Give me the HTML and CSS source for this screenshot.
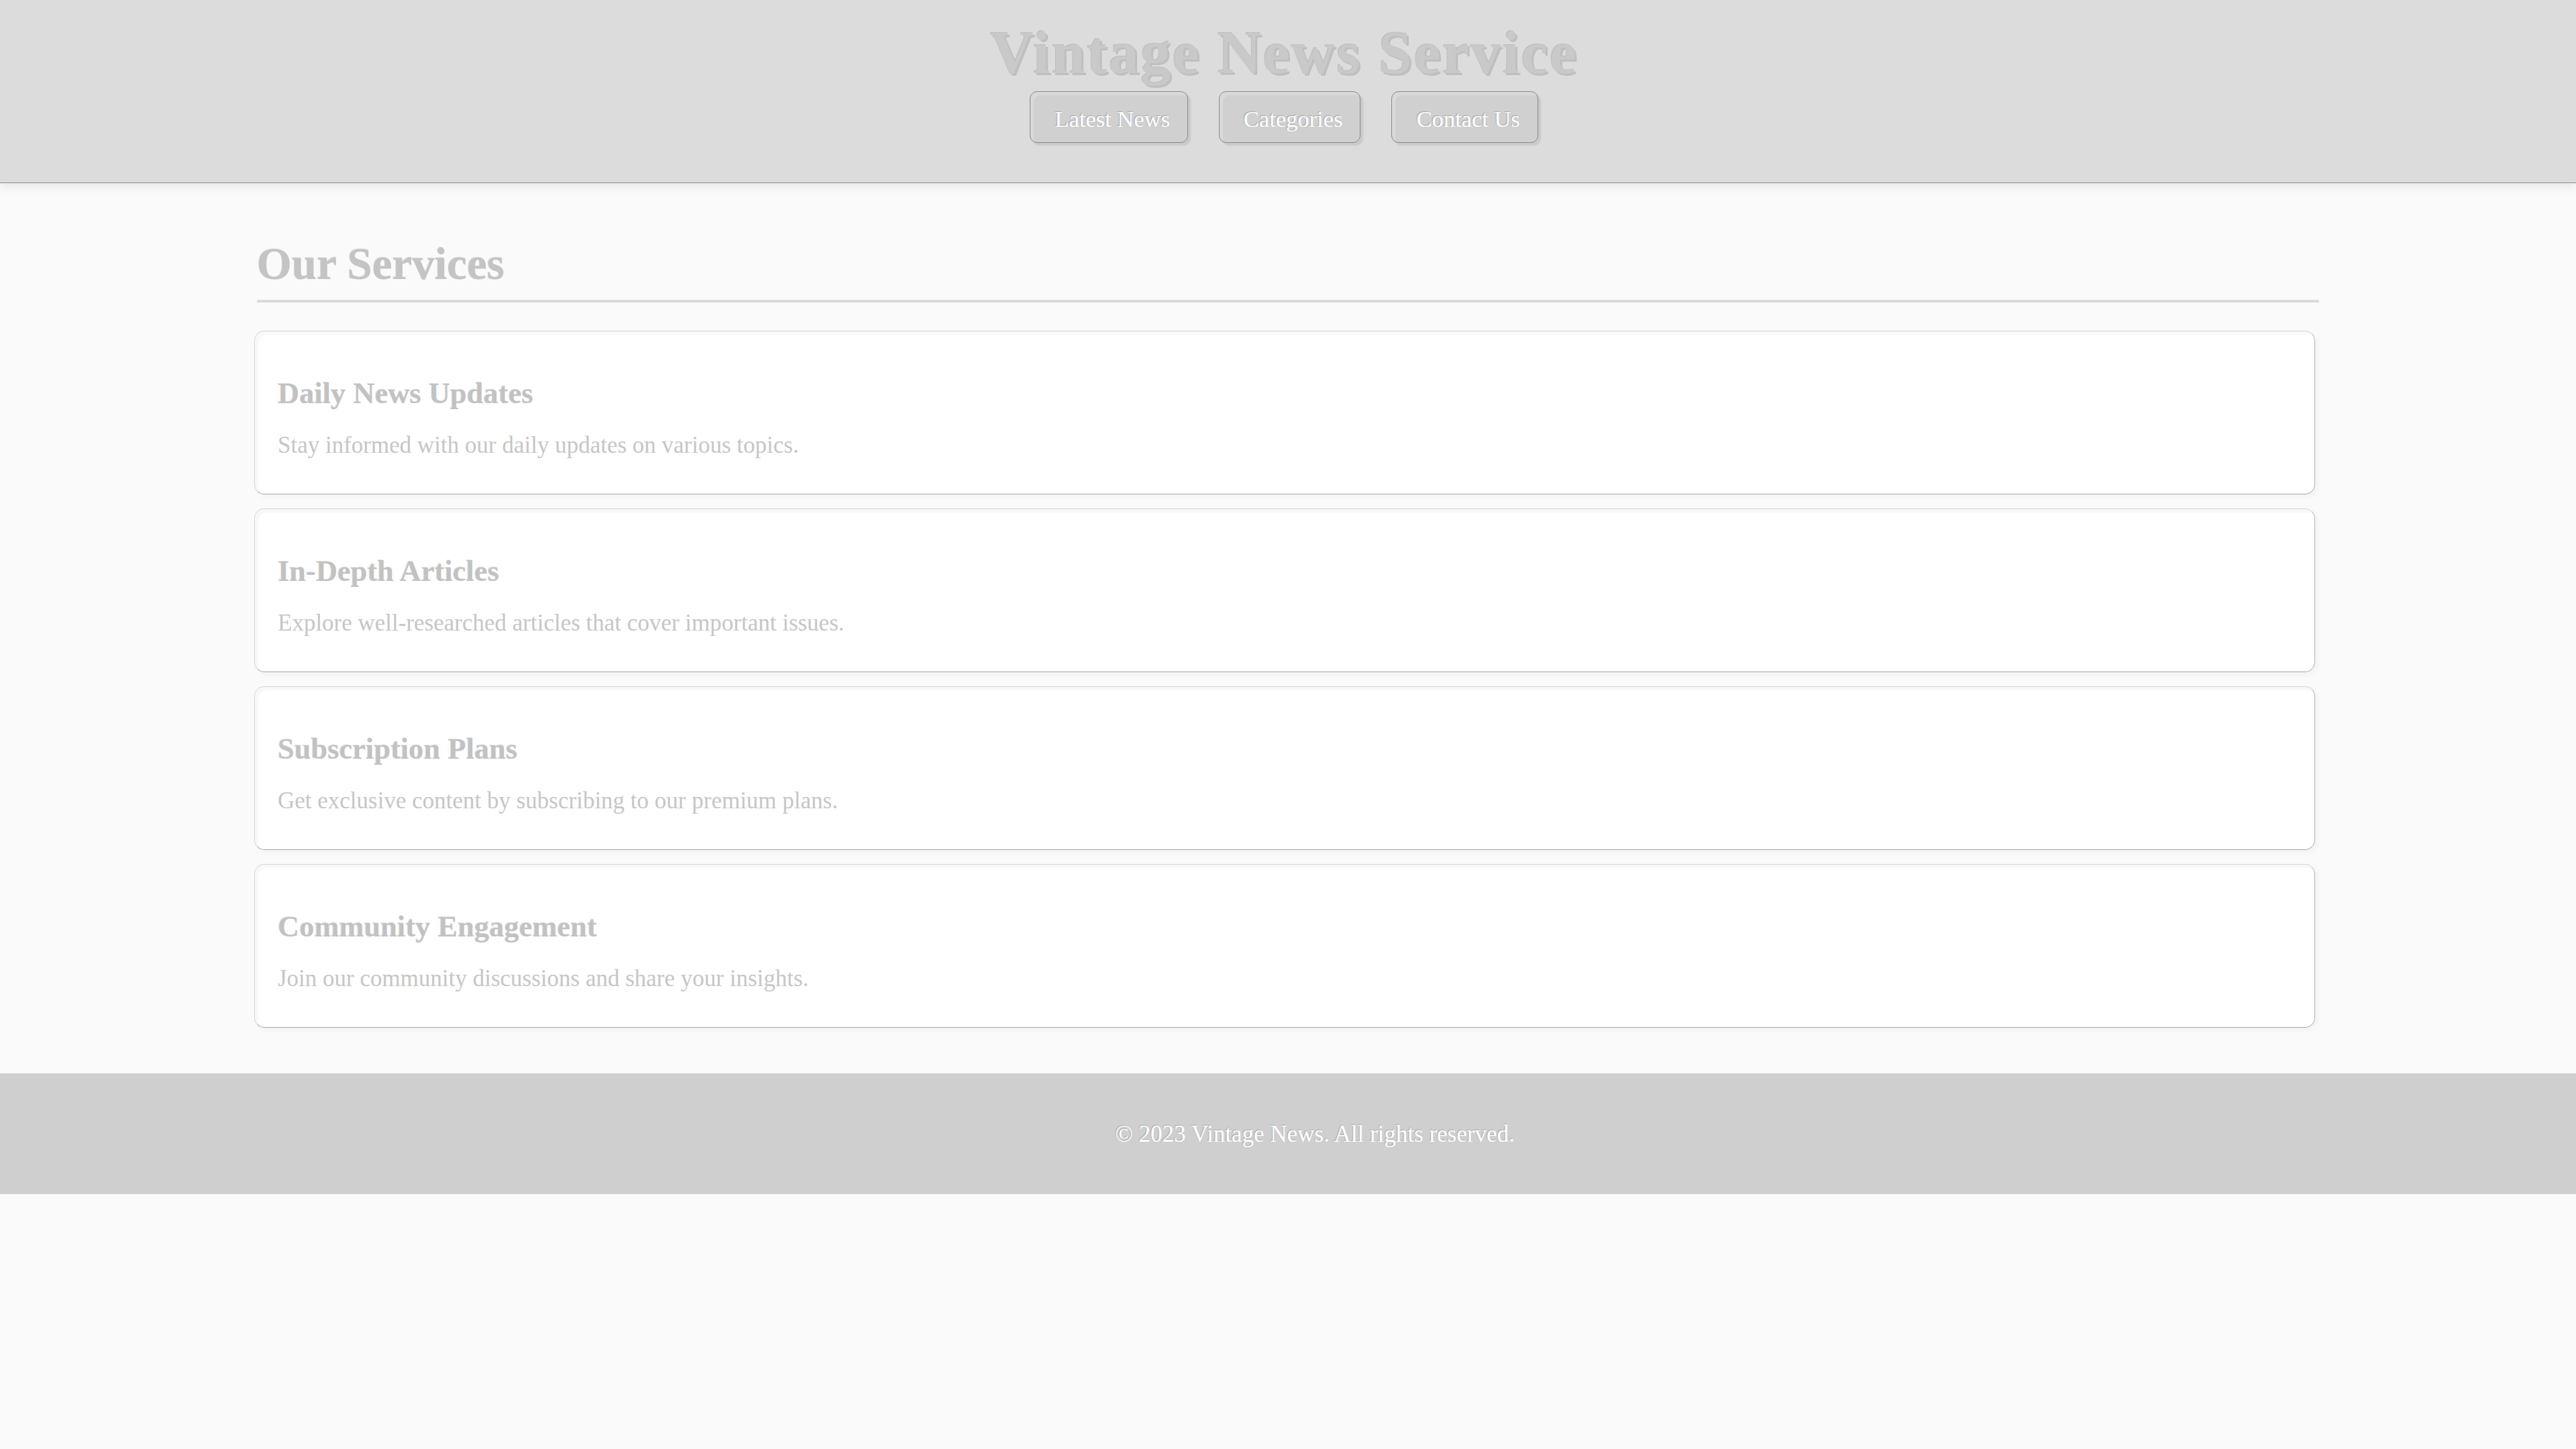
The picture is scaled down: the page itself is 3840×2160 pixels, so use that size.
FILE: index.html
```html
<!DOCTYPE html>
<html lang="en">
<head>
<meta charset="utf-8">
<title>Vintage News Service</title>
<link rel="stylesheet" href="styles.css">
</head>
<body>
<header class="site-header">
  <h1 class="site-title">Vintage News Service</h1>
  <nav class="site-nav">
    <a class="nav-btn nav-btn-1" href="#">Latest News</a>
    <a class="nav-btn" href="#">Categories</a>
    <a class="nav-btn" href="#">Contact Us</a>
  </nav>
</header>
<main class="content">
  <h2 class="section-title">Our Services</h2>
  <div class="card-list">
    <section class="card">
      <h3 class="card-title">Daily News Updates</h3>
      <p class="card-text">Stay informed with our daily updates on various topics.</p>
    </section>
    <section class="card">
      <h3 class="card-title">In-Depth Articles</h3>
      <p class="card-text">Explore well-researched articles that cover important issues.</p>
    </section>
    <section class="card">
      <h3 class="card-title">Subscription Plans</h3>
      <p class="card-text">Get exclusive content by subscribing to our premium plans.</p>
    </section>
    <section class="card">
      <h3 class="card-title">Community Engagement</h3>
      <p class="card-text">Join our community discussions and share your insights.</p>
    </section>
  </div>
</main>
<footer class="site-footer">
  <p class="footer-text">© 2023 Vintage News. All rights reserved.</p>
</footer>
</body>
</html>
```

FILE: styles.css
```css
* {
  box-sizing: border-box;
}

html, body {
  margin: 0;
  padding: 0;
}

body {
  background: #fafafa;
  font-family: "Liberation Serif", "Times New Roman", serif;
  font-size: 35px;
  color: #c6c6c6;
  font-variant-numeric: oldstyle-nums;
}

.site-header {
  background: #dcdcdc;
  border-bottom: 1px solid #8a8a8a;
  box-shadow: 0 6px 14px rgba(0, 0, 0, 0.07);
  height: 273px;
  padding: 27px 12px 0 0;
  text-align: center;
  position: relative;
  z-index: 1;
}

.site-title {
  margin: 0;
  font-size: 90px;
  font-weight: bold;
  letter-spacing: 2.5px;
  line-height: 103px;
  color: #c9c9c9;
  text-shadow: 3px 3px 0 #bfbfbf, -1px -1px 0 rgba(120, 120, 120, 0.3);
}

.site-nav {
  display: flex;
  justify-content: center;
  gap: 46px;
  margin-top: 6px;
}

.nav-btn {
  display: block;
  height: 77px;
  padding: 21px 26px 17px 36px;
  font-size: 34.5px;
  line-height: 39px;
  color: #ffffff;
  text-decoration: none;
  background: #d0d0d0;
  border: 1px solid #8a8a8a;
  border-radius: 11px;
  box-shadow: inset 5px 5px 0 #d9d9d9, 4px 4px 2px #c9c9c9;
  text-shadow: -1px -1px 1px rgba(90, 90, 90, 0.35);
}

.content {
  width: 3074px;
  margin: 0 auto;
  padding-top: 82px;
}

.section-title {
  margin: 0 0 42px;
  padding-bottom: 15px;
  font-size: 67px;
  line-height: 77px;
  font-weight: bold;
  color: #c4c4c4;
  border-bottom: 4px solid #dadada;
  text-shadow: -1px -1px 0 rgba(120, 120, 120, 0.3);
}

.card-list {
  display: flex;
  flex-direction: column;
  gap: 21px;
  margin: 0 6px 0 -4px;
}

.card {
  background: #ffffff;
  border: 1px solid #d6d6d6;
  border-right-color: #b4b4b4;
  border-bottom-color: #a6a6a6;
  border-radius: 15px;
  padding: 34px 34px;
  box-shadow: inset 5px 5px 0 #f8f8f8, 4px 4px 8px rgba(0, 0, 0, 0.035);
}

.card-title {
  margin: 34px 0 0;
  font-size: 44.5px;
  line-height: 49px;
  font-weight: bold;
  color: #c2c2c2;
  text-shadow: -1px -1px 0 rgba(120, 120, 120, 0.2);
}

.card-text {
  margin: 33px 0 18px;
  font-size: 35px;
  line-height: 40px;
  color: #c6c6c6;
}

.site-footer {
  margin-top: 68px;
  background: #cfcfcf;
  height: 180px;
  padding: 71px 0 0 80px;
  text-align: center;
}

.footer-text {
  margin: 0;
  font-size: 35px;
  line-height: 40px;
  color: #ffffff;
  text-shadow: -1px -1px 1px rgba(90, 90, 90, 0.3);
}
```
